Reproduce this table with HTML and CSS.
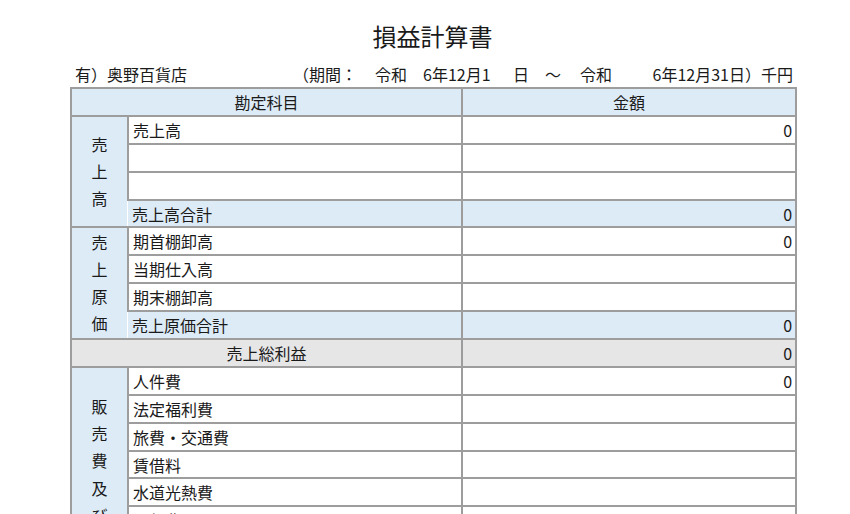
FILE: index.html
```html
<!DOCTYPE html>
<html lang="ja">
<head>
<meta charset="utf-8">
<title>損益計算書</title>
<link rel="stylesheet" href="styles.css">
</head>
<body>
<div class="page">
  <h1 class="title">損益計算書</h1>
  <div class="info">
    <span class="c1">有）奥野百貨店</span>
    <span class="c2">（期間：</span>
    <span class="c3">令和</span>
    <span class="c4">6年12月1</span>
    <span class="c5">日</span>
    <span class="c6">～</span>
    <span class="c7">令和</span>
    <span class="c8">6年12月31日）千円</span>
  </div>
  <table class="pl">
    <colgroup>
      <col class="col-group">
      <col class="col-item">
      <col class="col-amt">
    </colgroup>
    <thead>
      <tr>
        <th colspan="2" class="head">勘定科目</th>
        <th class="head">金額</th>
      </tr>
    </thead>
    <tbody>
      <tr>
        <td rowspan="4" class="group">売<br>上<br>高</td>
        <td class="item">売上高</td>
        <td class="amt">0</td>
      </tr>
      <tr><td class="item"></td><td class="amt"></td></tr>
      <tr><td class="item"></td><td class="amt"></td></tr>
      <tr class="total">
        <td class="item sum">売上高合計</td>
        <td class="amt sum">0</td>
      </tr>
      <tr>
        <td rowspan="4" class="group">売<br>上<br>原<br>価</td>
        <td class="item">期首棚卸高</td>
        <td class="amt">0</td>
      </tr>
      <tr><td class="item">当期仕入高</td><td class="amt"></td></tr>
      <tr><td class="item">期末棚卸高</td><td class="amt"></td></tr>
      <tr class="total">
        <td class="item sum">売上原価合計</td>
        <td class="amt sum">0</td>
      </tr>
      <tr class="gross">
        <td colspan="2" class="gross-label">売上総利益</td>
        <td class="amt gross-amt">0</td>
      </tr>
      <tr>
        <td rowspan="6" class="group group-top">販<br>売<br>費<br>及<br>び</td>
        <td class="item">人件費</td>
        <td class="amt">0</td>
      </tr>
      <tr><td class="item">法定福利費</td><td class="amt"></td></tr>
      <tr><td class="item">旅費・交通費</td><td class="amt"></td></tr>
      <tr><td class="item">賃借料</td><td class="amt"></td></tr>
      <tr><td class="item">水道光熱費</td><td class="amt"></td></tr>
      <tr><td class="item">通信費</td><td class="amt"></td></tr>
    </tbody>
  </table>
</div>
</body>
</html>
```
FILE: styles.css
```css
* { box-sizing: border-box; }
html, body {
  margin: 0;
  padding: 0;
  background: #ffffff;
  overflow: hidden;
}
body {
  width: 850px;
  height: 514px;
  font-family: "Noto Sans CJK JP", "Noto Sans", sans-serif;
  color: #1a1a1a;
}
.page {
  padding: 21px 0 0 69px;
  width: 850px;
  height: 514px;
  overflow: hidden;
}
.title {
  margin: 0;
  width: 727px;
  text-align: center;
  font-size: 24px;
  font-weight: normal;
  line-height: 30px;
  letter-spacing: 0;
}
.info {
  display: flex;
  margin-top: 13px;
  height: 20px;
  font-size: 16px;
  line-height: 20px;
  white-space: nowrap;
}
.info span { display: block; }
.c1 { width: 224px; padding-left: 6px; }
.c2 { width: 82px; }
.c3 { width: 48px; }
.c4 { width: 90px; }
.c5 { width: 32px; }
.c6 { width: 35px; }
.c7 { width: 63px; }
.c8 { width: 150px; text-align: right; }

.pl {
  margin: 3px 0 0 1px;
  width: 725px;
  table-layout: fixed;
  border-collapse: collapse;
  font-size: 16px;
}
.col-group { width: 57px; }
.col-item { width: 334px; }
.col-amt { width: 334px; }

.pl th, .pl td {
  height: 27.9px;
  padding: 0;
  border: 2px solid #9d9d9d;
  line-height: 24px;
  font-weight: normal;
  vertical-align: middle;
  white-space: nowrap;
  overflow: hidden;
}
.head {
  background: #ddebf7;
  text-align: center;
}
.group {
  background: #ddebf7;
  text-align: center;
  line-height: 27.2px !important;
  border-right: none !important;
}
.group-top {
  vertical-align: top !important;
  padding-top: 25px !important;
}
.item {
  padding-left: 4px !important;
  background: #ffffff;
}
.amt {
  text-align: right;
  padding-right: 3px !important;
  background: #ffffff;
}
.sum {
  background: #ddebf7;
}
.item.sum {
  border-left: none !important;
}
.gross-label {
  background: #e6e6e6;
  text-align: center;
}
.gross-amt {
  background: #e6e6e6;
}
```
